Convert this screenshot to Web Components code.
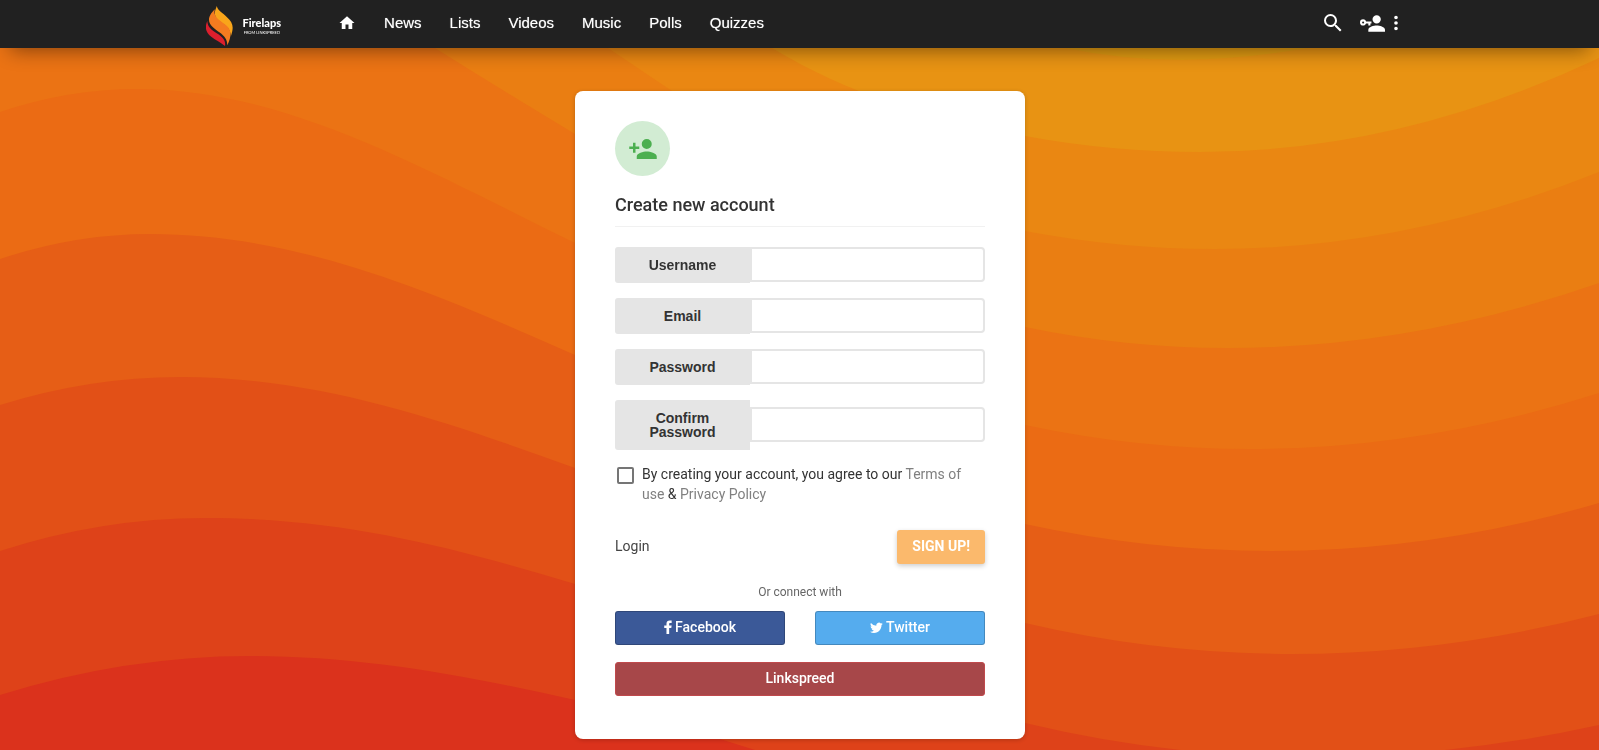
<!DOCTYPE html>
<html lang="en">
<head>
<meta charset="utf-8">
<title>Firelaps – Create new account</title>
<style>
html, body { margin: 0; min-height: 100%; }
body { font-family: Roboto, "Liberation Sans", sans-serif; font-size: 14px; line-height: 20px; color: #333; background: #e65e16; }
</style>
</head>
<body>
<fire-page>
  <fire-header slot="header"></fire-header>
  <signup-card></signup-card>
</fire-page>

<script>
const define = (name, html, init) => {
  const t = document.createElement('template');
  t.innerHTML = html;
  customElements.define(name, class extends HTMLElement {
    constructor() {
      super();
      this.attachShadow({ mode: 'open' }).append(t.content.cloneNode(true));
    }
    connectedCallback() { if (init) init(this, this.shadowRoot); }
  });
};

const ICONS = {
  home: 'M10,20V14H14V20H19V12H22L12,3L2,12H5V20H10Z',
  search: 'M9.5,3A6.5,6.5 0 0,1 16,9.5C16,11.11 15.41,12.59 14.44,13.73L14.71,14H15.5L20.5,19L19,20.5L14,15.5V14.71L13.73,14.44C12.59,15.41 11.11,16 9.5,16A6.5,6.5 0 0,1 3,9.5A6.5,6.5 0 0,1 9.5,3M9.5,5C7,5 5,7 5,9.5C5,12 7,14 9.5,14C12,14 14,12 14,9.5C14,7 12,5 9.5,5Z',
  key: 'M11,10V12H10V14H8V12H5.83C5.42,13.17 4.31,14 3,14A3,3 0 0,1 0,11A3,3 0 0,1 3,8C4.31,8 5.42,8.83 5.83,10H11M3,10A1,1 0 0,0 2,11A1,1 0 0,0 3,12A1,1 0 0,0 4,11A1,1 0 0,0 3,10M16,14C18.67,14 24,15.34 24,18V20H8V18C8,15.34 13.33,14 16,14M16,12A4,4 0 0,1 12,8A4,4 0 0,1 16,4A4,4 0 0,1 20,8A4,4 0 0,1 16,12Z',
  dots: 'M12,16A2,2 0 0,1 14,18A2,2 0 0,1 12,20A2,2 0 0,1 10,18A2,2 0 0,1 12,16M12,10A2,2 0 0,1 14,12A2,2 0 0,1 12,14A2,2 0 0,1 10,12A2,2 0 0,1 12,10M12,4A2,2 0 0,1 14,6A2,2 0 0,1 12,8A2,2 0 0,1 10,6A2,2 0 0,1 12,4Z',
  plus: 'M15,14C12.33,14 7,15.33 7,18V20H23V18C23,15.33 17.67,14 15,14M6,10V7H4V10H1V12H4V15H6V12H9V10M15,12A4,4 0 0,0 19,8A4,4 0 0,0 15,4A4,4 0 0,0 11,8A4,4 0 0,0 15,12Z',
  facebook: 'M17.500 2v3.900h-2.300c-1.500 0-1.800.8-1.800 1.900V10h4.100l-.6 4.200h-3.500V24H9V14.200H5.300V10H9V7.100C9 3.600 11.100 1.700 14.300 1.700c1.400 0 2.800.1 3.200.3z',
  twitter: 'M23.600 5.200a9.600 9.600 0 0 1-2.400 2.500v.6c0 6.400-4.900 13.700-13.800 13.700A13.700 13.700 0 0 1 0 19.800a9.900 9.900 0 0 0 7.200-2 4.900 4.900 0 0 1-4.500-3.400c.8.1 1.500.1 2.200-.1A4.900 4.900 0 0 1 1 9.500c.7.400 1.400.6 2.200.6A4.900 4.900 0 0 1 1.700 3.700a13.800 13.800 0 0 0 10 5.100A4.900 4.900 0 0 1 20 4.400c1.100-.2 2.100-.6 3.100-1.200a4.900 4.900 0 0 1-2.100 2.700c1-.1 1.900-.4 2.600-.7z'
};

define('fire-icon', `
<style>
  :host { display: inline-block; width: 24px; height: 24px; }
  svg { display: block; width: 100%; height: 100%; fill: currentColor; }
</style>
<svg viewBox="0 0 24 24" aria-hidden="true"><path/></svg>`,
(el, root) => {
  root.querySelector('path').setAttribute('d', ICONS[el.getAttribute('name')]);
  if (el.hasAttribute('view')) root.querySelector('svg').setAttribute('viewBox', el.getAttribute('view'));
});

define('wave-backdrop', `
<style>
  :host { display: block; }
  svg { display: block; width: 100%; height: 100%; }
</style>
<svg viewBox="0 0 1599 750" preserveAspectRatio="xMidYMid slice" aria-hidden="true">
  <rect width="1599" height="750" fill="#e09a12"/>
  <path fill="#e89313" d="M0 0H900L1065 48Q1123 60 1182 60Q1245 59 1308 48L1599 -40V750H0Z"/>
  <path fill="#ea8712" d="M0 0H690L772 48C850 95 930 119 1025 136Q1112 152 1200 152Q1400 152 1599 58V750H0Z"/>
  <path fill="#ea7e12" d="M0 0H536L608 48L672 91C780 160 920 212 1025 231Q1120 249 1215 249Q1407 249 1599 172V750H0Z"/>
  <path fill="#eb7314" d="M0 0H353L435 48Q505 92 575 134C700 210 880 300 1025 327Q1126 348 1228 348Q1413 348 1599 283V750H0Z"/>
  <path fill="#eb6b14" d="M0 112Q68 89 137 89C287 89 425 170 575 243C725 317 880 395 1025 425Q1138 449 1250 449Q1424 449 1599 393V750H0Z"/>
  <path fill="#e65e16" d="M0 259Q75 234 150 234C300 234 435 293 575 355C725 421 880 492 1025 524Q1148 551 1272 551Q1435 551 1599 503V750H0Z"/>
  <path fill="#e25017" d="M0 405Q90 377 180 377C320 377 445 421 575 468C725 522 880 590 1025 623Q1158 654 1292 654Q1445 654 1599 614V750H0Z"/>
  <path fill="#de4219" d="M0 551Q102 518 205 518C345 518 455 548 575 584C725 629 880 690 1025 723Q1167 757 1310 757Q1454 757 1599 725V750H0Z"/>
  <path fill="#db321c" d="M0 695Q125 656 250 656C360 656 465 675 575 700Q650 717 720 739L755 750H0Z"/>
</svg>`);

define('fire-page', `
<style>
  :host { display: block; }
  wave-backdrop { position: fixed; inset: 0; z-index: -1; }
  main { display: flex; justify-content: center; padding: 43px 15px 11px 16px; }
</style>
<wave-backdrop></wave-backdrop>
<slot name="header"></slot>
<main><slot></slot></main>`);

define('fire-logo', `
<style>
  :host { display: block; }
  a { display: flex; align-items: center; gap: 9px; color: #fff; text-decoration: none; }
  svg { display: block; width: 28px; height: 40px; }
  .name, .tag { display: block; font-family: Lato, "Liberation Sans", sans-serif; text-align: center; }
  .name { font-size: 11px; line-height: 14px; font-weight: 900; }
  .tag { font-size: 4px; line-height: 6px; font-weight: 400; }
</style>
<a href="#">
  <svg viewBox="2 0 80 122" preserveAspectRatio="xMinYMid meet" aria-hidden="true">
    <path fill="#f9a51a" d="M35 0C37 14 52 20 66 34C84 50 88 64 78 92C77 76 70 66 58 57C36 42 20 34 35 0Z"/>
    <path fill="#f47b20" d="M29 10C24 30 36 38 50 49C72 64 88 76 67 120C67 102 58 92 44 81C20 64 -8 46 29 10Z"/>
    <path fill="#dd1f2d" d="M6 46C6 64 20 74 36 84C56 97 62 106 60 122C46 110 32 106 18 94C0 80 -2 64 6 46Z"/>
  </svg>
  <span><span class="name">Firelaps</span><span class="tag">FROM LINKSPREED</span></span>
</a>`);

define('fire-header', `
<style>
  :host { display: block; position: relative; background: #212121; color: #fff; box-shadow: 0 12px 20px -10px rgba(0,0,0,.45); }
  .bar { display: flex; align-items: center; box-sizing: border-box; max-width: 1200px; height: 48px; margin: 0 auto; padding: 0 1px 0 6px; }
  fire-logo { padding-top: 3px; }
  nav { display: flex; align-items: center; margin-left: 43px; padding-bottom: 2px; font: 15px/20px "Liberation Sans", Arial, sans-serif; text-shadow: 0 0 1px rgba(255,255,255,.6); }
  nav a { display: block; padding: 0 14px; color: inherit; text-decoration: none; }
  nav fire-icon { display: block; width: 18px; height: 18px; }
  .tools { display: flex; align-items: center; margin-left: auto; padding-bottom: 2px; }
  button { display: block; padding: 0; border: 0; background: none; color: inherit; cursor: pointer; }
  button fire-icon { display: block; }
  .key { margin: 0 8px 0 15px; }
  .key fire-icon { width: 25px; height: 25px; }
  .dots fire-icon { width: 6px; height: 22px; }
</style>
<header class="bar">
  <fire-logo></fire-logo>
  <nav aria-label="Main">
    <a href="#" aria-label="Home"><fire-icon name="home"></fire-icon></a>
    <a href="#">News</a><a href="#">Lists</a><a href="#">Videos</a><a href="#">Music</a><a href="#">Polls</a><a href="#">Quizzes</a>
  </nav>
  <div class="tools">
    <button type="button" aria-label="Search"><fire-icon name="search"></fire-icon></button>
    <button type="button" class="key" aria-label="Log in"><fire-icon name="key"></fire-icon></button>
    <button type="button" class="dots" aria-label="More"><fire-icon name="dots" view="9 0 6 24"></fire-icon></button>
  </div>
</header>`);

define('form-field', `
<style>
  :host { display: flex; align-items: center; }
  label { box-sizing: border-box; flex: 0 0 135px; padding: 11px 20px; background: #e5e5e5; border-radius: 3px 0 0 3px; font: bold 14px/14px "Liberation Sans", Arial, sans-serif; color: #333; text-align: center; }
  input { box-sizing: border-box; flex: 1; min-width: 0; height: 35px; margin: 0 0 1px; padding: 0 10px; border: 2px solid #e5e5e5; border-radius: 0 4px 4px 0; background: #fff; font: inherit; color: inherit; outline: 0; }
</style>
<label for="field"></label><input id="field">`,
(el, root) => {
  root.querySelector('label').textContent = el.getAttribute('label');
  root.querySelector('input').type = el.getAttribute('type') || 'text';
});

define('social-button', `
<style>
  :host { display: block; }
  button { display: flex; align-items: center; justify-content: center; gap: 3px; box-sizing: border-box; width: 100%; height: 34px; padding: 0 12px 2px; border: 1px solid rgba(0,0,0,.2); border-radius: 3px; background: var(--brand) border-box; color: #fff; font: 500 14px/20px Roboto, sans-serif; cursor: pointer; }
  :host([light]) button { border-color: #c0494c; }
</style>
<button type="button"><slot></slot></button>`);

define('signup-card', `
<style>
  :host { display: block; box-sizing: border-box; width: 450px; max-width: 100%; padding: 30px 40px 43px; background: #fff; border-radius: 8px; box-shadow: 0 1px 4px rgba(0,0,0,.2); }
  .badge { display: flex; align-items: center; justify-content: center; width: 55px; height: 55px; border-radius: 50%; background: #d2ecd3; color: #4caf50; }
  .badge fire-icon { width: 30px; height: 30px; }
  h1 { margin: 17px 0 20px; padding-bottom: 9px; border-bottom: 1px solid #f1f1f1; font-size: 18px; line-height: 24px; font-weight: 500; color: #333; }
  .fields { display: grid; gap: 15px; }
  .terms { display: flex; gap: 8px; margin: 14px 0 0; padding-left: 2px; }
  .terms input { appearance: none; flex: none; box-sizing: border-box; width: 17px; height: 17px; margin: 3px 0 0; border: 2px solid #757575; border-radius: 2px; background: #fff; }
  a { color: #808080; text-decoration: none; }
  .actions { display: flex; align-items: center; justify-content: space-between; margin-top: 26px; }
  .actions a { padding-bottom: 2px; color: #444; }
  .submit { height: 34px; padding: 0 15px 2px; border: 0; border-radius: 3px; background: #fbb96c; color: #fff; font: bold 14px/20px Roboto, sans-serif; box-shadow: 0 2px 5px rgba(0,0,0,.2); }
  .or { margin: 18px 0 9px; font-size: 12px; line-height: 20px; text-align: center; color: #666; }
  .social { display: grid; grid-template-columns: 1fr 1fr; gap: 17px 30px; }
  .wide { grid-column: 1 / -1; }
  .fb { --brand: #3b5998; } .tw { --brand: #55acee; } .wide { --brand: #a74749; }
  .fb fire-icon { width: 8px; height: 14px; }
  .tw fire-icon { width: 13px; height: 13px; }
</style>
<div class="badge"><fire-icon name="plus"></fire-icon></div>
<h1>Create new account</h1>
<form>
  <div class="fields">
    <form-field label="Username"></form-field>
    <form-field label="Email" type="email"></form-field>
    <form-field label="Password" type="password"></form-field>
    <form-field label="Confirm Password" type="password"></form-field>
  </div>
  <div class="terms">
    <input type="checkbox" id="agree">
    <label for="agree">By creating your account, you agree to our <a href="#">Terms of use</a> &amp; <a href="#">Privacy Policy</a></label>
  </div>
  <div class="actions">
    <a href="#">Login</a>
    <button type="button" class="submit">SIGN UP!</button>
  </div>
  <p class="or">Or connect with</p>
  <div class="social">
    <social-button class="fb"><fire-icon name="facebook" view="5 1 13 23"></fire-icon>Facebook</social-button>
    <social-button class="tw"><fire-icon name="twitter"></fire-icon>Twitter</social-button>
    <social-button class="wide" light>Linkspreed</social-button>
  </div>
</form>`);
</script>
</body>
</html>
